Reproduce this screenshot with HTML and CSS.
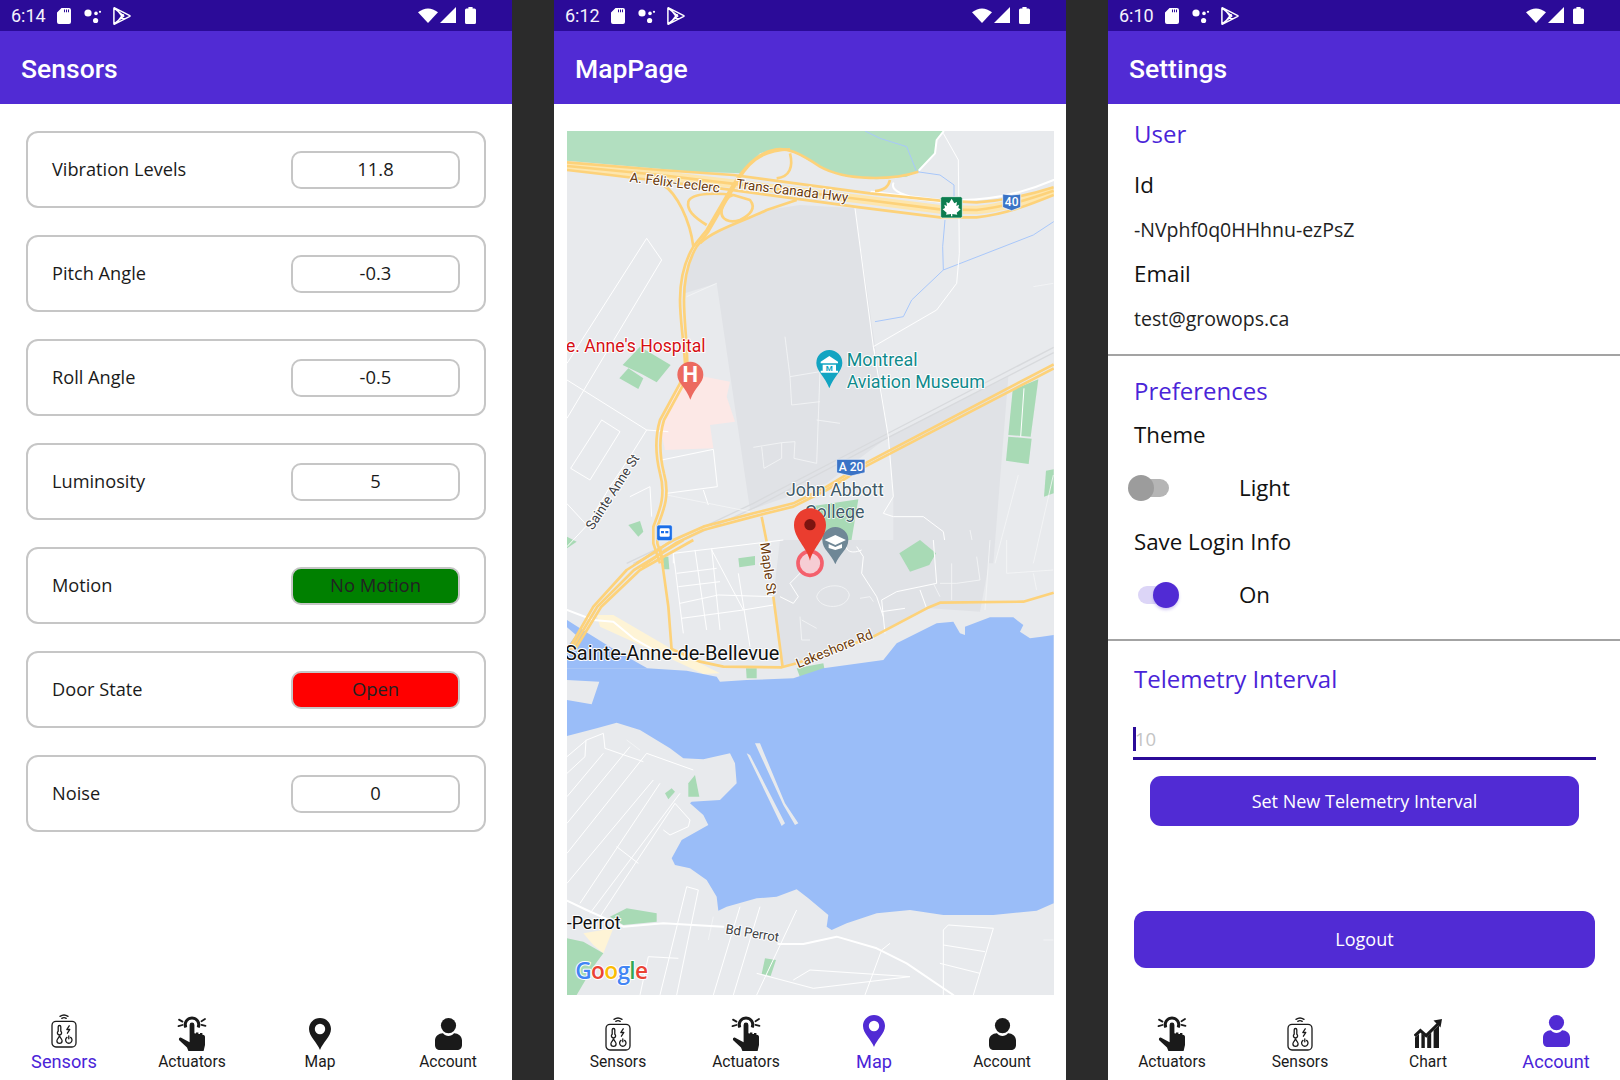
FILE: index.html
```html
<!DOCTYPE html>
<html lang="en">
<head>
<meta charset="utf-8">
<title>Sensors, Map and Settings</title>
<link rel="stylesheet" href="styles.css">
</head>
<body>
<svg class="sprite" width="0" height="0" aria-hidden="true">
  <symbol id="i-sd" viewBox="0 0 14 16"><path fill-rule="evenodd" d="M4.5 0H12a2 2 0 0 1 2 2v12a2 2 0 0 1-2 2H2a2 2 0 0 1-2-2V4.5zM7 1.6v2.6h1V1.6zM9 1.6v2.6h1V1.6zM11 1.6v2.6h1V1.6z"/></symbol>
  <symbol id="i-dots" viewBox="0 0 18 16"><circle cx="4" cy="5" r="3.6"/><circle cx="11.6" cy="12.5" r="2.6"/><circle cx="12" cy="5.4" r="1.8"/><circle cx="16" cy="3.8" r="1.1"/></symbol>
  <symbol id="i-play" viewBox="0 0 18 18"><path class="stroke-w" d="M.9 1.200v15.600c0 .4.300.6.700.4L16.800 9.400c.3-.2.300-.6 0-.8L1.600.8c-.4-.2-.7 0-.7.4zM1.200 1.200 10.800 9 1.200 16.800M5.200 4.400 11.400 12.400M5.200 13.600 11.400 5.600"/></symbol>
  <symbol id="i-wifi" viewBox="0 0 20 15"><path d="M0 4.200Q10-3.400 20 4.200L10 15z"/></symbol>
  <symbol id="i-signal" viewBox="0 0 16 16"><path d="M0 16 16 0v16z"/></symbol>
  <symbol id="i-batt" viewBox="0 0 11 17"><path d="M3.400 0h4.200v1.500H9.500A1.500 1.500 0 0 1 11 3v12.500a1.500 1.500 0 0 1-1.500 1.500h-8A1.500 1.500 0 0 1 0 15.500V3a1.500 1.500 0 0 1 1.500-1.500h1.900z"/></symbol>
  <symbol id="i-sensors" viewBox="0 0 26 35">
    <g class="line">
      <path d="M9 3.400Q13 .6 17 3.400M10.800 5.400Q13 3.900 15.200 5.400"/>
      <rect x="1" y="8.400" width="24" height="25.600" rx="4"/>
      <path d="M7.200 13.800a1.300 1.300 0 0 1 2.600 0v4.400a2.100 2.100 0 1 1-2.600 0zM18.200 12.800l-2.400 3.700h3l-2.400 3.700M8.500 23.200c1.700 2.300 2.600 3.300 2.600 4.600a2.600 2.600 0 0 1-5.200 0c0-1.300.9-2.300 2.600-4.600zM16 24.400a3.200 3.200 0 1 0 3.600 0M17.800 22.800v3"/>
    </g>
  </symbol>
  <symbol id="i-tap" viewBox="0 0 30 36">
    <path class="ray" d="M2 3.600 5.500 5.600M1.500 10.200l4-1.200M28 3 24.500 5.200M28.500 9.800l-4-1"/>
    <path class="ring" d="M8.800 11.500A6.800 6.800 0 1 1 21.200 11.500"/>
    <path d="M12.600 9a2.400 2.400 0 0 1 4.800 0v8.200l1.600.2v-1h2.400v1.500l1.600.2v-1h2.400v1.600l1.400.2a2 2 0 0 1 1.200 1.800V29l-1.400 6H11.400l-1.400-3.400-7.800-7.400c-.9-1.300.3-3 2-2.500l8.400 4.600z"/>
  </symbol>
  <symbol id="i-pin" viewBox="0 0 22 32"><path fill-rule="evenodd" d="M11 0C4.900 0 0 4.900 0 11c0 7.600 8.300 13.600 11 21 2.700-7.400 11-13.400 11-21C22 4.900 17.100 0 11 0zM11 5.800a5.200 5.200 0 1 1 0 10.400 5.200 5.200 0 0 1 0-10.400z"/></symbol>
  <symbol id="i-person" viewBox="0 0 27 32"><circle cx="13.500" cy="7.600" r="7.600"/><path d="M0 27v-4.500C0 18 4.200 15 8 15.200c1.500 1.800 3.400 2.700 5.500 2.700s4-.9 5.500-2.700C22.800 15 27 18 27 22.500V27c0 3-2 5-5 5H5c-3 0-5-2-5-5z"/></symbol>
  <symbol id="i-chart" viewBox="0 0 28 29"><path d="M1 18.500l4-3.400V29H1zM7.400 14.200l3.400 2.900V29H7.400zM13.200 17.400l4-3.800V29h-4zM19.600 11.300l5.400-5V29h-5.400z"/><path class="ray wide" d="M.6 17 6.400 11.600 12.200 16.600 25 4"/><path d="M19.500 1.500 28 0l-1.500 8.500z"/></symbol>
</svg>

<main class="phones">

  <section class="phone">
    <div class="statusbar">
      <span class="clock">6:14</span>
      <svg class="st st-sd"><use href="#i-sd"/></svg>
      <svg class="st st-dots"><use href="#i-dots"/></svg>
      <svg class="st st-play"><use href="#i-play"/></svg>
      <span class="st-spacer"></span>
      <svg class="st st-wifi"><use href="#i-wifi"/></svg>
      <svg class="st st-signal"><use href="#i-signal"/></svg>
      <svg class="st st-batt"><use href="#i-batt"/></svg>
    </div>
    <header class="appbar">Sensors</header>
    <div class="content sensors">
      <div class="card"><span class="card-label">Vibration Levels</span><span class="value">11.8</span></div>
      <div class="card"><span class="card-label">Pitch Angle</span><span class="value">-0.3</span></div>
      <div class="card"><span class="card-label">Roll Angle</span><span class="value">-0.5</span></div>
      <div class="card"><span class="card-label">Luminosity</span><span class="value">5</span></div>
      <div class="card"><span class="card-label">Motion</span><span class="value value-green">No Motion</span></div>
      <div class="card"><span class="card-label">Door State</span><span class="value value-red">Open</span></div>
      <div class="card"><span class="card-label">Noise</span><span class="value">0</span></div>
    </div>
    <nav class="tabs">
      <a class="tab active"><span class="tab-icon"><svg class="ic ic-sensors"><use href="#i-sensors"/></svg></span><span class="tab-label">Sensors</span></a>
      <a class="tab"><span class="tab-icon"><svg class="ic ic-tap"><use href="#i-tap"/></svg></span><span class="tab-label">Actuators</span></a>
      <a class="tab"><span class="tab-icon"><svg class="ic ic-pin"><use href="#i-pin"/></svg></span><span class="tab-label">Map</span></a>
      <a class="tab"><span class="tab-icon"><svg class="ic ic-person"><use href="#i-person"/></svg></span><span class="tab-label">Account</span></a>
    </nav>
  </section>

  <section class="phone">
    <div class="statusbar">
      <span class="clock">6:12</span>
      <svg class="st st-sd"><use href="#i-sd"/></svg>
      <svg class="st st-dots"><use href="#i-dots"/></svg>
      <svg class="st st-play"><use href="#i-play"/></svg>
      <span class="st-spacer"></span>
      <svg class="st st-wifi"><use href="#i-wifi"/></svg>
      <svg class="st st-signal"><use href="#i-signal"/></svg>
      <svg class="st st-batt"><use href="#i-batt"/></svg>
    </div>
    <header class="appbar">MapPage</header>
    <div class="content map-wrap">
      <svg class="map" viewBox="0 0 487 864" role="img" aria-label="Map of Sainte-Anne-de-Bellevue">
        <rect class="m-base" width="487" height="864"/>
        <!-- upper half, drawn in 3x units -->
        <g transform="translate(-7,-11) scale(.33333)">
          <path class="m-campus" d="M375 520C380 440 400 390 440 350L620 270 720 255 885 265 985 950 800 1090 570 1170 470 490Z"/>
          <path class="m-campus" d="M985 950 1345 770 1300 1330 1000 1330 1000 1140Z"/>
          <path class="m-hosp" d="M315 990 300 920 360 790 380 760 510 785 500 830 525 905 450 915 460 985Z"/>
          <path class="m-park-top" d="M21 33H1150L1128 60 1125 100 1080 150 1040 170 950 178 860 170 780 140 700 95 660 85 600 100 545 160 400 155 21 122Z"/>
          <g class="m-green">
            <path d="M188 735 240 680 332 735 290 787 245 762Z"/>
            <path d="M178 775 205 745 250 775 235 807Z"/>
            <path d="M205 1215 240 1203 250 1235 235 1250Z"/>
            <path d="M21 1250 50 1265 21 1285Z"/>
            <path d="M1358 810 1435 778 1412 950 1345 945Z"/>
            <path d="M1345 950 1415 956 1406 1032 1338 1022Z"/>
            <path d="M1458 1052 1481 1048V1120L1452 1130Z"/>
            <path d="M760 1158 895 1138 872 1275 770 1300 790 1200Z"/>
          </g>
          <path class="m-rail" d="M1481 682 980 942 580 1150 200 1330M1481 698 990 950 590 1160 220 1330"/>
          <path class="m-river" d="M915 33 960 55 1040 80 1070 155 1140 165 1182 195V232M1155 300 1148 380 1150 450 1055 540 1030 590 945 605M1150 450 1420 345 1481 305"/>
          <path class="m-road" d="M260 355 305 420 21 895M260 355 21 730M21 780 260 930 325 935M125 900 180 935 90 1080 32 1045ZM260 930 210 1010 150 1100 82 1215 21 1280M885 265 940 680 985 950 1000 1130 970 1180 1000 1190 1090 1190 1150 1235 1160 1300M1150 40 1195 120 1198 400 1190 490 1130 570 940 680 945 700M20 1150 80 1215M210 1130 270 1100 275 1190M305 1020 460 988 472 1100 320 1120M430 1110 445 1155M1392 805 1382 950"/>
          <path class="m-road-thin" d="M675 650 690 770 780 755 770 1030M690 770 695 855 780 845M770 900 840 910M580 982 665 968 705 965 702 1015 770 1030M605 980 612 1045 665 1015V968M320 1125 570 1175M380 530 470 490M1480 490 1420 500M1305 1330 1375 1065M1420 1330 1480 1065M1230 1230 1250 1330"/>
          <path class="m-road-white" d="M1150 35 1130 60 1125 100 1078 150M935 215 1140 240H1200C1300 240 1400 215 1481 180M1000 190C990 215 1040 230 1100 240M930 220 1140 245"/>
          <path class="m-band" d="M21 138 300 165 510 190 920 240 1140 268 1250 270C1330 262 1400 240 1481 212"/>
          <g class="m-hwy">
            <path d="M21 127 300 150 520 165 930 220 1140 242 1250 247C1330 242 1400 228 1481 202"/>
            <path d="M21 138 300 165 510 190 920 240 1140 268 1250 270C1330 262 1400 240 1481 212"/>
            <path d="M21 150 150 165 480 205 900 262 1140 292 1250 292C1340 282 1420 250 1481 225"/>
            <path d="M1075 155C1000 180 860 185 780 140 720 100 680 80 640 90 590 100 545 150 510 210L440 330 400 380C370 430 360 480 360 540 360 600 370 650 375 730L360 790 300 900C285 950 285 1000 300 1060 320 1130 295 1180 280 1220V1270L300 1330"/>
            <path d="M690 88C600 90 560 130 520 205L445 335 410 380C380 430 372 480 372 540 372 600 380 650 382 730"/>
            <path d="M372 790 312 900C297 950 297 1000 312 1060 332 1130 307 1180 292 1220V1270L312 1330"/>
            <path d="M310 195C350 220 390 300 400 380"/>
            <path d="M440 315C400 290 380 270 385 245 395 215 480 220 520 225L570 240C590 265 570 285 540 300 510 310 480 300 485 270 490 250 500 230 520 225"/>
            <path d="M690 100C700 140 690 170 650 175"/>
            <path d="M420 370C460 330 560 300 620 270L710 240M990 180C985 200 975 210 945 213"/>
            <path d="M1481 733 915 1030 800 1100 700 1150 580 1180 430 1220 340 1260 230 1330"/>
            <path d="M1481 745 915 1040 800 1110 700 1160 580 1190 430 1230 350 1268 245 1340"/>
            <path d="M605 1190 620 1265"/>
          </g>
        </g>
        <!-- lower half, drawn in 3x units -->
        <g transform="translate(-7,409) scale(.33333)">
          <path class="m-campus" d="M660 0H1300L1260 215 1110 205 940 290 780 340 670 380 640 170Z"/>
          <path class="m-beige" d="M110 225 160 225 340 330 480 400 430 402 340 360 120 260Z"/>
          <path class="m-beige" d="M70 1180 160 1165 130 1240 100 1215Z"/>
          <g class="m-green">
            <path d="M535 55 585 48V75L538 82Z"/>
            <path d="M1018 40 1080 0 1128 40 1108 75 1050 95Z"/>
            <path d="M558 385H590V415H560Z"/>
            <path d="M710 385 790 370 795 395 720 412Z"/>
            <path d="M310 50H325L328 88H312Z"/>
            <path d="M385 730 405 705 418 770 385 770Z"/>
            <path d="M315 760 335 745 345 755 325 778Z"/>
            <path d="M150 1130 200 1105 290 1120V1145L190 1155Z"/>
            <path d="M21 1195 70 1205 130 1240 100 1280 50 1365H21Z"/>
            <path d="M615 1255 648 1260 632 1308 605 1302Z"/>
          </g>
          <path class="m-water" d="M21 385H260L380 392 470 410 480 425 560 420 700 415 790 385 970 360 1010 310 1130 250 1180 245 1200 280 1215 285 1215 260 1290 232H1360L1390 255 1380 275 1410 295 1445 290 1481 285V1090L1430 1112 1300 1125H1150L1050 1110 950 1120 860 1150 815 1170 800 1160 805 1125 745 1075 710 1048 650 1070 590 1075 500 1100 475 1112 470 1070 440 1020 390 985 345 975 335 955 365 900 445 855 430 825 390 790 395 785 480 780 530 730 525 670 510 640 430 658 370 655 330 625 240 570 170 548 110 565 21 588Z"/>
          <path class="m-water" d="M21 240 60 265 165 330 262 385 21 385Z"/>
          <path class="m-base" d="M21 262 48 285 21 322ZM21 420 118 425 95 493 21 480ZM585 610 600 610 675 790 715 850 705 855 670 795ZM560 640 570 645 675 850 665 858Z"/>
          <path class="m-road" d="M340 40 465 25 670 0M340 40 370 280M405 30 440 270M455 25 480 270M350 100 470 85M355 140 480 125M360 190 475 165 640 170M365 235 550 210 640 195M340 40V70M535 100 570 320M455 30 550 210M690 130 715 170 700 190 660 170M690 130 730 90M890 20 910 50 905 100 950 170 970 230M1120 0 1130 130 1010 155 965 180 975 280M965 215 1035 205M1080 150 1100 205M860 0C850 30 870 45 905 30M21 650 80 600 130 580 135 625 250 665M21 700 75 650 78 600M21 770 130 640M21 850 210 620M21 940 260 640 400 690M21 1030 280 720M60 1090 300 730M90 1120 360 760M170 920 235 970M120 1130 345 790 390 840 385 860 330 885 310 870"/>
          <path class="m-road" d="M300 1365 380 1040 415 1050 350 1365M240 1365 265 1250 355 1255M460 1365 540 1100M520 1365 600 1100M590 1365 710 1110M1150 1365 1150 1170 1165 1155 1300 1165 1240 1365M1150 1215 1275 1235M1140 1270 1260 1300M915 1365 965 1230 990 1210M590 1300 760 1345 1050 1310M700 1320 750 1290 1050 1310"/>
          <path class="m-road-thin" d="M770 170C780 130 860 125 868 165 860 210 780 210 770 170ZM720 230 725 300H750M725 240 770 265M900 175 930 170 940 185M1120 130 1140 170M1140 130 1190 130 1260 120 1250 50M1175 70V180M1290 0 1275 210M1340 0V100L1480 90M1430 150 1420 100M200 600 240 630M460 1130 445 1200M1450 1200H1480"/>
          <path class="m-road-white" d="M21 210 100 240 160 245 220 295 290 335M21 1082 80 1110 190 1160 310 1150 490 1160M655 1212H730L830 1190 950 1225 1040 1270 1180 1365"/>
          <g class="m-hwy">
            <path d="M300 20 325 200 335 330"/>
            <path d="M640 170 668 382"/>
            <path d="M330 325 420 365 490 380 665 382 710 370 940 290 1100 205 1140 188 1390 185 1481 158"/>
            <path d="M340 0 200 90 100 200 25 330"/>
            <path d="M370 0 222 90 112 200 34 330"/>
            <path d="M400 0 240 90 124 200 44 330"/>
          </g>
        </g>

        <!-- labels, then pins -->
        <g transform="translate(-7,-11) scale(.33333)">
          <text class="t t-brown" transform="translate(208,185) rotate(7)">A. Félix-Leclerc</text>
          <text class="t t-brown" transform="translate(527,205) rotate(7)">Trans-Canada Hwy</text>
          <text class="t t-hosp" x="18" y="697">e. Anne's Hospital</text>
          <text class="t t-teal" x="860" y="738">Montreal</text>
          <text class="t t-teal" x="860" y="803">Aviation Museum</text>
          <text class="t t-grey" transform="translate(98,1232) rotate(-57)">Sainte Anne St</text>
          <text class="t t-slate" x="678" y="1129">John Abbott</text>
          <text class="t t-slate t-college" x="735" y="1194">College</text>

          <path class="p-museum" d="M808 690a39 39 0 0 1 39 39c0 25-26 40-39 76-13-36-39-51-39-76a39 39 0 0 1 39-39z"/>
          <path class="p-white" d="M808 708 834 725V730H782V725ZM788 734H828V752H834V758H782V752H788Z"/>
          <text class="p-m" x="808" y="752">M</text>
          <path class="p-hosp" d="M391 725a39 39 0 0 1 39 39c0 25-26 38-39 75-13-37-39-50-39-75a39 39 0 0 1 39-39z"/>
          <text class="p-h" x="391" y="785">H</text>
          <path class="p-college" d="M826 1221a39 39 0 0 1 39 39c0 28-26 40-39 73-13-33-39-45-39-73a39 39 0 0 1 39-39z"/>
          <path class="p-white" d="M826 1245 858 1260 826 1275 794 1260ZM806 1272 826 1281 846 1272V1284L826 1290 806 1284Z"/>
          <circle class="p-ring" cx="750" cy="1330" r="36"/>
          <path class="p-red" d="M750 1165C720 1165 702 1190 702 1215 702 1255 740 1280 750 1322 760 1280 798 1255 798 1215 798 1190 780 1165 750 1165Z"/>
          <circle class="p-reddot" cx="750" cy="1214" r="17"/>

          <rect class="s-green" x="1142" y="230" width="65" height="64" rx="5"/>
          <path class="p-white" d="M1175 236 1183 250 1191 246 1189 258 1197 254 1195 264 1202 268 1190 278 1192 284 1177 282V289H1173V282L1158 284 1160 278 1148 268 1155 264 1153 254 1161 258 1159 246 1167 250Z"/>
          <path class="s-blue" d="M1328 222Q1355 228 1382 222V262L1355 272 1328 262Z"/>
          <text class="s-text" x="1355" y="258">40</text>
          <path class="s-blue" d="M830 1018H915V1058L873 1068 830 1058Z"/>
          <text class="s-text" x="873" y="1054">A 20</text>
          <rect class="s-train" x="290" y="1215" width="47" height="47" rx="6"/>
          <path class="p-white" d="M303 1225H325Q329 1225 329 1229V1247Q329 1250 325 1250H303Q299 1250 299 1247V1229Q299 1225 303 1225Z"/>
          <path class="s-trainw" d="M303 1233H312V1240H303ZM316 1233H325V1240H316Z"/>
        </g>
        <g transform="translate(-7,409) scale(.33333)">
          <text class="t t-city" x="15" y="360">Sainte-Anne-de-Bellevue</text>
          <text class="t t-brown" transform="translate(600,10) rotate(82)">Maple St</text>
          <text class="t t-brown" transform="translate(715,385) rotate(-22)">Lakeshore Rd</text>
          <text class="t t-city t-perrot" x="20" y="1166">-Perrot</text>
          <text class="t t-grey t-bd" transform="translate(495,1180) rotate(9)">Bd Perrot</text>
          <text class="t t-google" x="46" y="1318"><tspan class="g-b">G</tspan><tspan class="g-r">o</tspan><tspan class="g-y">o</tspan><tspan class="g-b">g</tspan><tspan class="g-g">l</tspan><tspan class="g-r">e</tspan></text>
        </g>
      </svg>
    </div>
    <nav class="tabs">
      <a class="tab"><span class="tab-icon"><svg class="ic ic-sensors"><use href="#i-sensors"/></svg></span><span class="tab-label">Sensors</span></a>
      <a class="tab"><span class="tab-icon"><svg class="ic ic-tap"><use href="#i-tap"/></svg></span><span class="tab-label">Actuators</span></a>
      <a class="tab active"><span class="tab-icon"><svg class="ic ic-pin"><use href="#i-pin"/></svg></span><span class="tab-label">Map</span></a>
      <a class="tab"><span class="tab-icon"><svg class="ic ic-person"><use href="#i-person"/></svg></span><span class="tab-label">Account</span></a>
    </nav>
  </section>

  <section class="phone">
    <div class="statusbar">
      <span class="clock">6:10</span>
      <svg class="st st-sd"><use href="#i-sd"/></svg>
      <svg class="st st-dots"><use href="#i-dots"/></svg>
      <svg class="st st-play"><use href="#i-play"/></svg>
      <span class="st-spacer"></span>
      <svg class="st st-wifi"><use href="#i-wifi"/></svg>
      <svg class="st st-signal"><use href="#i-signal"/></svg>
      <svg class="st st-batt"><use href="#i-batt"/></svg>
    </div>
    <header class="appbar">Settings</header>
    <div class="content settings">
      <div class="group group-user">
        <h2 class="section">User</h2>
        <h3 class="field f-id">Id</h3>
        <p class="val v-id">-NVphf0q0HHhnu-ezPsZ</p>
        <h3 class="field f-email">Email</h3>
        <p class="val v-email">test@growops.ca</p>
      </div>
      <div class="group group-prefs">
        <h2 class="section">Preferences</h2>
        <h3 class="field f-theme">Theme</h3>
        <div class="switch-row">
          <span class="switch"><span class="track"></span><span class="knob"></span></span>
          <span class="field">Light</span>
        </div>
        <h3 class="field f-save">Save Login Info</h3>
        <div class="switch-row">
          <span class="switch on"><span class="track"></span><span class="knob"></span></span>
          <span class="field">On</span>
        </div>
      </div>
      <div class="group group-telemetry">
        <h2 class="section">Telemetry Interval</h2>
        <div class="input"><span class="caret"></span><span class="placeholder">10</span></div>
        <button class="btn btn-set">Set New Telemetry Interval</button>
        <button class="btn btn-logout">Logout</button>
      </div>
    </div>
    <nav class="tabs">
      <a class="tab"><span class="tab-icon"><svg class="ic ic-tap"><use href="#i-tap"/></svg></span><span class="tab-label">Actuators</span></a>
      <a class="tab"><span class="tab-icon"><svg class="ic ic-sensors"><use href="#i-sensors"/></svg></span><span class="tab-label">Sensors</span></a>
      <a class="tab"><span class="tab-icon"><svg class="ic ic-chart"><use href="#i-chart"/></svg></span><span class="tab-label">Chart</span></a>
      <a class="tab active"><span class="tab-icon"><svg class="ic ic-person"><use href="#i-person"/></svg></span><span class="tab-label">Account</span></a>
    </nav>
  </section>

</main>
</body>
</html>
```

FILE: styles.css
```css
* { box-sizing: border-box; }
html, body { margin: 0; padding: 0; }
body { width: 1620px; height: 1080px; background: #2b2b2b; overflow: hidden; font-family: "Open Sans", sans-serif; color: #111; }
.sprite { position: absolute; }
.phones { display: grid; grid-template-columns: 512px 512px 512px; column-gap: 42px; height: 1080px; }
.phone { display: flex; flex-direction: column; background: #fff; height: 1080px; overflow: hidden; }

/* status bar */
.statusbar { height: 31px; flex: none; background: #2b0b98; display: flex; align-items: center; color: #fff; fill: #fff; padding-left: 11px; }
.clock { font: 400 18px/31px Roboto, sans-serif; width: 46px; color: #f4f2fc; }
.st { display: block; fill: #fff; flex: none; }
.st-sd { width: 14px; height: 16px; }
.st-dots { width: 18px; height: 16px; margin-left: 13px; }
.st-play { width: 18px; height: 18px; margin-left: 11px; }
.stroke-w { fill: none; stroke: #fff; stroke-width: 1.500; stroke-linejoin: round; }
.st-spacer { flex: 1; }
.st-wifi { width: 20px; height: 15px; }
.st-signal { width: 16px; height: 16px; margin-left: 2px; margin-top: -1px; }
.st-batt { width: 11px; height: 17px; margin-left: 9px; margin-right: 36px; margin-top: -1px; }

/* app bar */
.appbar { height: 73px; flex: none; background: #512bd4; color: #fff; font: 500 26.500px/75px Roboto, sans-serif; padding-left: 21px; }
.content { flex: 1; min-height: 0; }

/* sensors */
.sensors { padding: 27px 26px 0; display: flex; flex-direction: column; gap: 27px; }
.card { height: 77px; border: 2px solid #c6c6c6; border-radius: 12px; display: flex; align-items: center; justify-content: space-between; padding: 0 24px; }
.card-label { font-size: 18.200px; line-height: 26px; margin-top: -2px; color: #1a1a1a; }
.value { width: 169px; height: 38px; border: 2px solid #c6c6c6; border-radius: 10px; display: flex; align-items: center; justify-content: center; font-size: 18.400px; line-height: 26px; padding-bottom: 1px; color: #1a1a1a; }
.value-green { background: #008000; color: #222; }
.value-red { background: #ff0000; color: #222; }

/* map */
.map-wrap { padding: 27px 12px 0 13px; }
.map { display: block; width: 487px; height: 864px; }
.m-base { fill: #e8eaed; }
.m-campus { fill: #e0e2e6; }
.m-hosp { fill: #fce8e6; }
.m-park-top { fill: #b2dfc0; }
.m-green { fill: #a8dab5; }
.m-water { fill: #9abdf8; }
.m-beige { fill: #fef4d6; }
.m-rail { fill: none; stroke: #d8dadd; stroke-width: 4; }
.m-river { fill: none; stroke: #a8c7fa; stroke-width: 3; }
.m-road { fill: none; stroke: #fff; stroke-width: 3; stroke-linejoin: round; }
.m-road-thin { fill: none; stroke: #f4f5f6; stroke-width: 2.500; stroke-linejoin: round; }
.m-road-white { fill: none; stroke: #fff; stroke-width: 6; stroke-linejoin: round; stroke-linecap: round; }
.m-band { fill: none; stroke: #fde6ae; stroke-width: 26; }
.m-hwy path { fill: none; stroke: #fdd27a; stroke-width: 8; stroke-linejoin: round; }
.p-museum { fill: #12a4c2; }
.p-hosp { fill: #ec6a60; }
.p-college { fill: #6f8796; }
.p-red { fill: #ea3d2f; }
.p-reddot { fill: #7c1410; }
.p-ring { fill: #f6cdd4; stroke: #f4606c; stroke-width: 11; }
.p-white { fill: #fff; }
.p-m { font: 700 24px Roboto, sans-serif; fill: #12a4c2; text-anchor: middle; }
.p-h { font: 700 66px Roboto, sans-serif; fill: #fff; text-anchor: middle; }
.s-green { fill: #0c7d4f; stroke: #fff; stroke-width: 2; }
.s-blue { fill: #3a73c6; stroke: #fff; stroke-width: 2; }
.s-text { font: 500 36px Roboto, sans-serif; fill: #fff; text-anchor: middle; }
.s-train { fill: #1a6ee8; stroke: #fff; stroke-width: 2; }
.s-trainw { fill: #1a6ee8; }
.t { font-family: Roboto, sans-serif; paint-order: stroke; stroke: #fff; stroke-width: 6px; stroke-linejoin: round; }
.t-brown { font-size: 40.500px; fill: #6a3a0c; }
.t-grey { font-size: 40px; fill: #3c4043; }
.t-hosp { font-size: 52.800px; fill: #d50f14; }
.t-teal { font-size: 53.600px; fill: #0f8a8c; }
.t-slate { font-size: 53.600px; fill: #3f5a68; }
.t-college { stroke-width: 4px; }
.t-city { font-size: 60px; fill: #111; }
.t-perrot { font-size: 54px; }
.t-bd { font-size: 39px; }
.t-google { font-family: "Open Sans", sans-serif; font-size: 68px; font-weight: 600; letter-spacing: -2px; }
.g-b { fill: #4285f4; }
.g-r { fill: #ea4335; }
.g-y { fill: #fbbc05; }
.g-g { fill: #34a853; }

/* settings */
.settings { padding: 0; display: flex; flex-direction: column; }
.group { padding-left: 26px; padding-right: 25px; }
.group-user { height: 252px; padding-top: 13px; border-bottom: 2px solid #a3a3a3; }
.group-prefs { height: 285px; padding-top: 18px; border-bottom: 2px solid #a3a3a3; }
.group-telemetry { padding-top: 21px; }
.section { margin: 0; font-weight: 400; font-size: 24px; line-height: 34px; color: #4a24d8; }
.field { margin: 0; font-weight: 400; font-size: 22.300px; line-height: 34px; color: #111; }
.val { margin: 0; font-size: 19.500px; line-height: 28px; color: #222; }
.f-id { margin-top: 17px; }
.v-id { margin-top: 14px; }
.f-email { margin-top: 13px; }
.v-email { margin-top: 14px; }
.f-theme { margin-top: 10px; }
.f-save { margin-top: 20px; }
.switch-row { display: flex; align-items: center; height: 34px; margin-top: 19px; }
.switch { position: relative; display: block; width: 105px; height: 26px; flex: none; }
.track { position: absolute; left: 0; top: 4px; width: 35px; height: 18px; border-radius: 9px; background: #b5b5b5; }
.knob { position: absolute; left: -6px; top: 0; width: 26px; height: 26px; border-radius: 50%; background: #9c9c9c; }
.switch.on .track { left: 4px; width: 36px; background: #dcd5f7; }
.switch.on .knob { left: 19px; background: #512bd4; box-shadow: 0 2px 3px rgba(81, 43, 212, .25); }
.input { display: flex; align-items: center; height: 40px; margin: 24px 0 0 -1px; width: 463px; border-bottom: 3px solid #2b0b98; }
.caret { display: block; width: 3px; height: 24px; background: #2b0b98; flex: none; }
.placeholder { font-size: 18.500px; color: #c4c4c4; margin-left: -1px; }
.btn { display: block; border: 0; color: #fff; background: #512bd4; font-family: "Open Sans", sans-serif; font-size: 18px; border-radius: 11px; padding: 0; }
.btn-set { width: 429px; height: 50px; margin: 16px 0 0 16px; }
.btn-logout { width: 461px; height: 57px; margin: 85px 0 0 0; border-radius: 12px; padding-bottom: 2px; }

/* tabs */
.tabs { height: 70px; flex: none; display: grid; grid-template-columns: repeat(4, 128px); background: #fff; }
.tab { display: flex; flex-direction: column; align-items: center; padding-top: 6px; color: #1a1a1a; fill: #1a1a1a; }
.tab-icon { height: 35px; display: flex; align-items: center; justify-content: center; }
.tab-label { font: 400 15.600px/20px Roboto, sans-serif; margin-top: 1px; }
.ic { display: block; fill: inherit; }
.ic-sensors { width: 26px; height: 35px; }
.ic-tap { width: 30px; height: 36px; }
.ic-pin { width: 22px; height: 32px; }
.ic-person { width: 27px; height: 32px; }
.ic-chart { width: 28px; height: 29px; }
.line { fill: none; stroke: #1a1a1a; stroke-width: 1.300; stroke-linejoin: round; stroke-linecap: round; }
.ray { fill: none; stroke: #1a1a1a; stroke-width: 1.800; stroke-linecap: round; }
.ray.wide { stroke-width: 3; stroke-linecap: butt; }
.ring { fill: none; stroke: #1a1a1a; stroke-width: 3; }
.tab.active { color: #4a24d8; fill: #512bd4; }
.tab.active .tab-label { font-size: 18.200px; }
.tab.active .tab-icon { transform: translateY(-3px); }
.tab.active .line { stroke: #5a33e0; }
```
